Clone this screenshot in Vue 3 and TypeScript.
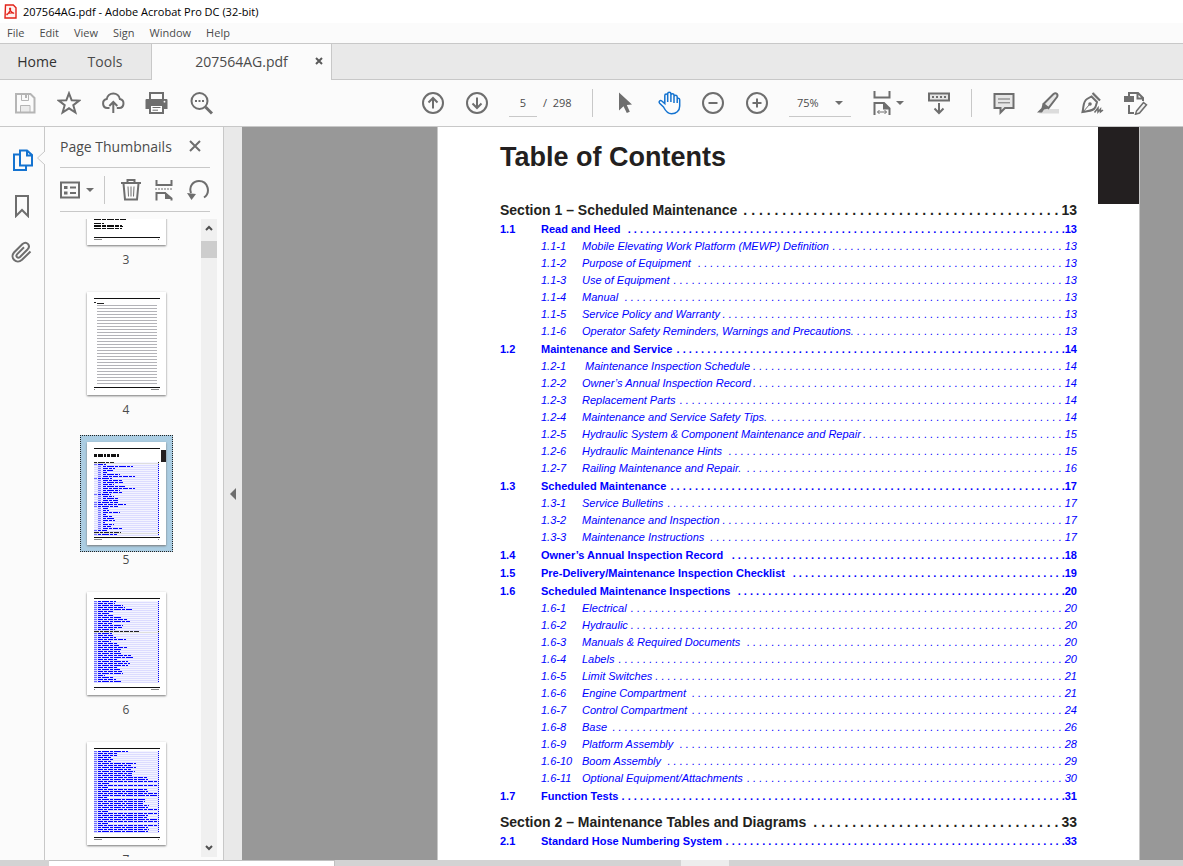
<script setup lang="ts">
import { onBeforeUnmount, onMounted, ref } from 'vue'

type Level = 'section' | 'chapter' | 'item'

interface Entry {
  level: Level
  num: string
  title: string
  page: number
}

interface Group {
  key: string
  entries: Entry[]
}

const section = (title: string, page: number): Entry => ({ level: 'section', num: '', title, page })
const chapter = (num: string, title: string, page: number): Entry => ({ level: 'chapter', num, title, page })
const item = (num: string, title: string, page: number): Entry => ({ level: 'item', num, title, page })

const groups: Group[] = [
  { key: 's1', entries: [section('Section 1 – Scheduled Maintenance', 13)] },
  {
    key: '1.1',
    entries: [
      chapter('1.1', 'Read and Heed', 13),
      item('1.1-1', 'Mobile Elevating Work Platform (MEWP) Definition', 13),
      item('1.1-2', 'Purpose of Equipment', 13),
      item('1.1-3', 'Use of Equipment', 13),
      item('1.1-4', 'Manual', 13),
      item('1.1-5', 'Service Policy and Warranty', 13),
      item('1.1-6', 'Operator Safety Reminders, Warnings and Precautions.', 13),
    ],
  },
  {
    key: '1.2',
    entries: [
      chapter('1.2', 'Maintenance and Service', 14),
      item('1.2-1', '\u00a0Maintenance Inspection Schedule', 14),
      item('1.2-2', 'Owner’s Annual Inspection Record', 14),
      item('1.2-3', 'Replacement Parts', 14),
      item('1.2-4', 'Maintenance and Service Safety Tips.', 14),
      item('1.2-5', 'Hydraulic System & Component Maintenance and Repair', 15),
      item('1.2-6', 'Hydraulic Maintenance Hints', 15),
      item('1.2-7', 'Railing Maintenance and Repair.', 16),
    ],
  },
  {
    key: '1.3',
    entries: [
      chapter('1.3', 'Scheduled Maintenance', 17),
      item('1.3-1', 'Service Bulletins', 17),
      item('1.3-2', 'Maintenance and Inspection', 17),
      item('1.3-3', 'Maintenance Instructions', 17),
    ],
  },
  { key: '1.4', entries: [chapter('1.4', 'Owner’s Annual Inspection Record', 18)] },
  { key: '1.5', entries: [chapter('1.5', 'Pre-Delivery/Maintenance Inspection Checklist', 19)] },
  {
    key: '1.6',
    entries: [
      chapter('1.6', 'Scheduled Maintenance Inspections', 20),
      item('1.6-1', 'Electrical', 20),
      item('1.6-2', 'Hydraulic', 20),
      item('1.6-3', 'Manuals & Required Documents', 20),
      item('1.6-4', 'Labels', 20),
      item('1.6-5', 'Limit Switches', 21),
      item('1.6-6', 'Engine Compartment', 21),
      item('1.6-7', 'Control Compartment', 24),
      item('1.6-8', 'Base', 26),
      item('1.6-9', 'Platform Assembly', 28),
      item('1.6-10', 'Boom Assembly', 29),
      item('1.6-11', 'Optional Equipment/Attachments', 30),
    ],
  },
  { key: '1.7', entries: [chapter('1.7', 'Function Tests', 31)] },
  { key: 's2', entries: [section('Section 2 – Maintenance Tables and Diagrams', 33)] },
  { key: '2.1', entries: [chapter('2.1', 'Standard Hose Numbering System', 33)] },
]

// Dot leaders hold as many dots as fit between a title and its page number.
const pageEl = ref<HTMLElement | null>(null)
const dots = ref<Record<string, string>>({})

function fillLeaders() {
  if (!pageEl.value) return
  const next: Record<string, string> = {}
  pageEl.value.querySelectorAll<HTMLElement>('[data-leader]').forEach((el) => {
    const glyph = parseFloat(getComputedStyle(el).fontSize) * 0.278
    const count = Math.max(0, Math.floor((el.clientWidth + glyph - 1) / (glyph * 2)))
    next[el.dataset.leader ?? ''] = Array(count).fill('.').join('\u00a0')
  })
  dots.value = next
}

let observer: ResizeObserver | undefined
onMounted(() => {
  fillLeaders()
  observer = new ResizeObserver(fillLeaders)
  if (pageEl.value) observer.observe(pageEl.value)
})
onBeforeUnmount(() => observer?.disconnect())

const menus = ['File', 'Edit', 'View', 'Sign', 'Window', 'Help']

interface Line {
  x: number
  w: number
  dark: boolean
  numX: number
}

const tocLines: Line[] = groups.flatMap((g) =>
  g.entries.map((e) => ({
    x: e.level === 'section' ? 7 : e.level === 'chapter' ? 11 : 16,
    w: Math.round(e.title.length * 0.62),
    dark: e.level === 'section',
    numX: e.level === 'chapter' ? 7 : 11,
  })),
)

const widthsSix = [18, 17, 25, 27, 34, 16, 12, 15, 23, 30, 32, 14, 25, 24, 17, 45, 14, 15, 18, 28, 13, 20, 21, 30, 24, 22, 23, 33, 36, 20, 30, 32, 30, 19, 22, 24, 25, 7, 15, 18, 23]
const widthsSeven = [30, 20, 19, 13, 15, 13, 38, 33, 38, 33, 37, 34, 34, 50, 50, 60, 12, 60, 10, 50, 50, 60, 60, 10, 47, 47, 45, 51, 50, 60, 10, 60, 50, 50, 60, 60, 10, 60, 50, 51, 50]

const lineList = (widths: number[], darkAt: number): Line[] =>
  widths.map((w, i) => ({ x: i === darkAt ? 7 : 11, w, dark: i === darkAt, numX: 7 }))

interface Thumb {
  page: number
  kind: 'text' | 'ruled' | 'toc'
  lines: Line[]
  top: number
}

const thumbs: Thumb[] = [
  { page: 3, kind: 'text', lines: [], top: 20 },
  { page: 4, kind: 'ruled', lines: [], top: 14 },
  { page: 5, kind: 'toc', lines: tocLines, top: 21 },
  { page: 6, kind: 'toc', lines: lineList(widthsSix, 15), top: 10 },
  { page: 7, kind: 'toc', lines: lineList(widthsSeven, -1), top: 10 },
]

const selected = ref(5)
const pageInput = ref('5')
const zoomLevel = ref('75%')
</script>

<template>
  <div class="app">
    <header class="titlebar">
      <svg class="logo" viewBox="0 0 13 15" aria-hidden="true">
        <path d="M1.500 1h7.800l2.700 2.700V14H1z" fill="#fff3f1" stroke="#e2231a" stroke-width="1.400" />
        <path d="M6 4c1.300 0 .7 3.200-3.200 7M6 4c-1.200 0 .4 4.600 4.200 5.400M3 10.800c-1.200-.9 3.800-2.800 7-1.600" fill="none" stroke="#e2231a" stroke-width="1.200" />
      </svg>
      <span>207564AG.pdf - Adobe Acrobat Pro DC (32-bit)</span>
    </header>

    <nav class="menubar">
      <button v-for="m in menus" :key="m" type="button">{{ m }}</button>
    </nav>

    <div class="tabs">
      <button type="button" class="tab home">Home</button>
      <button type="button" class="tab tools">Tools</button>
      <div class="doc-tab">
        <span class="doc-name">207564AG.pdf</span>
        <button type="button" class="close-tab" aria-label="Close tab">
          <svg viewBox="0 0 8 8"><path d="M1 1l6 6M7 1L1 7" stroke="#5a5a5a" stroke-width="2" /></svg>
        </button>
      </div>
    </div>

    <div class="toolbar">
      <button type="button" class="tool disabled" aria-label="Save">
        <svg viewBox="0 0 24 24"><path d="M8 15h8.500v6H8z" fill="#ebebeb" /><path class="s" d="M3 3h14.500l4 4v14.500H3z" /><path class="s thin" d="M8.500 3v6.500h7V3M7.500 21v-6.500h9.500v6.500" /><path class="f" d="M12 4h2v3h-2z" /></svg>
      </button>
      <button type="button" class="tool" aria-label="Star">
        <svg viewBox="0 0 24 24"><path class="s" d="M12 2.300l2.700 7 7.500.3-5.900 4.600 2.100 7.300L12 17.300l-6.400 4.200 2.100-7.300L1.800 9.600l7.500-.3z" /></svg>
      </button>
      <button type="button" class="tool" aria-label="Share">
        <svg viewBox="0 0 24 24"><path class="s" d="M8.500 17H6.300a4.500 4.500 0 0 1-.6-8.900 6.700 6.700 0 0 1 13.200 0A4.500 4.500 0 0 1 18.200 17h-2.400M12.300 22V11M8.300 15l4-4 4 4" /></svg>
      </button>
      <button type="button" class="tool" aria-label="Print">
        <svg viewBox="0 0 24 24"><path class="s" d="M5 8V2h13v6" /><path class="f" d="M1.500 8h20q1 0 1 1v9h-4v-4H4.500v4h-4V9q0-1 1-1z" /><path d="M5 14h13v8H5z" class="s" fill="#fff" /><path class="s thin" d="M7.500 16.500h8M7.500 19.200h5.500" /><circle cx="19.500" cy="10.700" r=".9" fill="#fff" /></svg>
      </button>
      <button type="button" class="tool" aria-label="Find text">
        <svg viewBox="0 0 24 24"><circle class="s" cx="10.500" cy="10" r="8" /><path d="M16.500 16l6.500 6.500" class="s" stroke-width="3" /><path class="f" d="M6 9h2v2H6zM9.500 9h2v2h-2zM13 9h2v2h-2z" /></svg>
      </button>

      <button type="button" class="tool first" aria-label="Previous page">
        <svg viewBox="0 0 24 24"><circle class="s" cx="12" cy="12" r="10" /><path class="s" d="M12 17.500V7M7.500 11.500L12 7l4.500 4.500" /></svg>
      </button>
      <button type="button" class="tool" aria-label="Next page">
        <svg viewBox="0 0 24 24"><circle class="s" cx="12" cy="12" r="10" /><path class="s" d="M12 6.500V17M7.500 12.500L12 17l4.500-4.500" /></svg>
      </button>
      <input v-model="pageInput" class="page-input" type="text" aria-label="Page number" />
      <span class="page-count">/&nbsp; 298</span>
      <i class="sep"></i>
      <button type="button" class="tool" aria-label="Select">
        <svg viewBox="0 0 24 24"><path class="f" d="M6 1.500v18l4.500-4.200 3.300 6.700 3-1.300-3-6.700 5.200-.5z" /></svg>
      </button>
      <button type="button" class="tool active" aria-label="Hand">
        <svg viewBox="0 0 24 24"><path class="s hand" d="M6.500 16L2.600 12.200C1.200 10.600 3.200 8.800 4.800 10l3 2.600V4.500c0-2 2.900-2 2.900 0V11 3c0-2.200 3.200-2.200 3.200 0v8-6.800c0-2 3.100-2 3.100 0V12 5.800c0-2 3-2 3.200 0V12 8.500c0-1.800 2.500-1.600 2.500.3V15c0 5-3.700 7.800-8.100 7.800-4.400 0-6.200-3-8.100-6.800z" /></svg>
      </button>
      <button type="button" class="tool" aria-label="Zoom out">
        <svg viewBox="0 0 24 24"><circle class="s" cx="12" cy="12" r="10" /><path class="s" d="M7.500 12h9" /></svg>
      </button>
      <button type="button" class="tool" aria-label="Zoom in">
        <svg viewBox="0 0 24 24"><circle class="s" cx="12" cy="12" r="10" /><path class="s" d="M7.500 12h9M12 7.500v9" /></svg>
      </button>
      <div class="zoom">
        <select v-model="zoomLevel" aria-label="Zoom level">
          <option>50%</option>
          <option>75%</option>
          <option>100%</option>
        </select>
        <svg class="caret" viewBox="0 0 8 4"><path class="f" d="M0 0h8L4 4z" /></svg>
      </div>
      <button type="button" class="tool fit" aria-label="Fit width">
        <svg viewBox="0 0 24 24"><path class="s" d="M4.500 0v6.500h15V0M4.500 24V12h9.500l5.500 5.500V24" /><path d="M13 11.500l7 7h-7z" class="f" /><path class="s thin" d="M7.500 21h9M9.500 19l-2 2 2 2M14.500 19l2 2-2 2" /></svg>
        <svg class="caret" viewBox="0 0 8 4"><path class="f" d="M0 0h8L4 4z" /></svg>
      </button>
      <button type="button" class="tool" aria-label="Read mode">
        <svg viewBox="0 0 24 24"><path class="s" d="M2 2.500h20v7H2z" fill="#e6e6e6" /><path class="f" d="M5 5h2v2H5zM9 5h2v2H9zM13 5h2v2h-2zM17 5h2v2h-2z" /><path class="s" d="M12 12v10M7.500 17.500L12 22l4.500-4.500" /></svg>
      </button>
      <i class="sep"></i>
      <button type="button" class="tool" aria-label="Add comment">
        <svg viewBox="0 0 24 24"><path class="s" d="M2.500 3h19v14H13l-4.500 4.500V17h-6z" fill="#e6e6e6" /><path class="s thin" d="M6 8h12M6 11.800h12" /></svg>
      </button>
      <button type="button" class="tool" aria-label="Highlight text">
        <svg viewBox="0 0 24 24"><path d="M6 18h17v4.500H3z" fill="#dcdcdc" /><path class="s" d="M7.500 13L17.500 3c2.500-2 5 .5 3.500 3l-8.500 11z" fill="#e6e6e6" /><path class="f" d="M6.500 13l6 4.500-4.500 1-2 3H1l4.500-4.500z" /></svg>
      </button>
      <button type="button" class="tool" aria-label="Sign document">
        <svg viewBox="0 0 24 24"><path d="M14 1l7 8-3 1-6-6z" fill="#dcdcdc" /><path class="s" d="M12.500 2l7.500 7.500M11.500 5.500l5.500 5.500-1.500 5c-2 4-6 3.500-13 5 1.500-7 .5-10.500 4.500-13z" /><path class="s thin" d="M3 21l6.500-7.500" /><circle class="f" cx="10" cy="13" r="1.800" /><path class="s thick" d="M14.500 21.500l3.500-4.500v4l2.500-3v3l2.500-2" /></svg>
      </button>
      <button type="button" class="tool" aria-label="Edit document">
        <svg viewBox="0 0 24 24"><path class="f" d="M0 5h10v6H0z" /><path class="s" d="M5 5V2h9l5 5v3M5 14v8h5M13.500 2v5.500H19" /><path class="s thick" d="M12.500 20l7-8.500 3 2.300-7 8.200-4 1.200z" fill="#f3f3f3" /></svg>
      </button>
    </div>

    <main class="workspace">
      <nav class="rail" aria-label="Navigation panes">
        <button type="button" class="rail-btn active" aria-label="Page thumbnails">
          <svg viewBox="0 0 24 24"><path class="s" d="M10 2.500h7l5 4.500v10.500H10zM17 3v4.500H22M9.500 6.500H4V22h12v-4" /></svg>
        </button>
        <button type="button" class="rail-btn" aria-label="Bookmarks">
          <svg viewBox="0 0 24 24"><path class="s" d="M6 2h12v20l-6-6-6 6z" /></svg>
        </button>
        <button type="button" class="rail-btn" aria-label="Attachments">
          <svg viewBox="0 0 24 24"><path class="s" d="M20.500 11.500l-8.500 8.300c-5.500 5-12.500-1.800-8-7.300L12.500 4c4-3.500 8.500 1.500 5.200 5.200L10 17c-2.300 2-4.800-.8-2.800-2.900l6.800-6.800" /></svg>
        </button>
        <svg class="notch" viewBox="0 0 9 16"><path d="M9 0v1L1.500 8 9 15v1" fill="#fbfbfb" stroke="#c8c8c8" /></svg>
      </nav>

      <aside class="panel">
        <div class="panel-head">
          <h2>Page Thumbnails</h2>
          <button type="button" aria-label="Close panel">
            <svg viewBox="0 0 12 12"><path d="M1 1l10 10M11 1L1 11" stroke="#6e6e6e" stroke-width="2" /></svg>
          </button>
        </div>
        <div class="panel-tools">
          <button type="button" class="options" aria-label="Options">
            <svg class="list-icon" viewBox="0 0 20 18"><path class="s" d="M1 1.500h18v15H1z" /><path class="f" d="M4 5h3.500v3H4zM4 10.500h3.500v3H4z" /><path class="s" d="M10 6.500h6M10 12h6" /></svg>
            <svg class="caret" viewBox="0 0 8 4"><path class="f" d="M0 0h8L4 4z" /></svg>
          </button>
          <i class="sep small"></i>
          <button type="button" aria-label="Delete pages">
            <svg viewBox="0 0 24 24"><path class="s" d="M2 5h20M8.500 5V2h7v3M4.500 5.500l1.500 16h12l1.500-16" /><path class="s thin" d="M9 8.500l.5 10M12 8.500v10M15 8.500l-.5 10" /></svg>
          </button>
          <button type="button" aria-label="Split pages">
            <svg viewBox="0 0 24 24"><path class="s" d="M4.500 2v5h15V2M4.500 22.500V15H13l6.500 5.500v2" /><path class="f" d="M13 14l7 7h-7z" /><path class="s thin" d="M3 11h18" stroke-dasharray="2 1" /></svg>
          </button>
          <button type="button" aria-label="Rotate pages">
            <svg viewBox="0 0 24 24"><path class="s" d="M5 15C2.500 8 7.500 3 13 3c9 0 12 11.500 5 16.500" /><path class="f" d="M1 15l9 1-4.500 6z" /></svg>
          </button>
        </div>
        <div class="thumb-area">
          <div class="thumb-view">
            <ol class="thumbs">
              <li v-for="t in thumbs" :key="t.page">
                <button type="button" class="thumb" :class="{ selected: selected === t.page }" :aria-label="'Page ' + t.page" @click="selected = t.page">
                  <span class="sheet">
                    <svg viewBox="0 0 79 103" aria-hidden="true" shape-rendering="crispEdges">
                      <rect x="7" y="6" width="66" height="1" fill="#111" />
                      <template v-if="t.kind === 'ruled'">
                        <path d="M7 10.500h2M10 11.500h7" stroke="#222" />
                        <rect v-for="n in 27" :key="n" x="10" :y="10 + n * 3" width="60" height="1" fill="#b3b3b8" />
                      </template>
                      <template v-else-if="t.kind === 'text'">
                        <path d="M7 77.500h32M7 81.500h10M7 83.500h28M7 84.500h29M7 86.500h28" stroke="#111" stroke-dasharray="7 1 4 1" />
                      </template>
                      <template v-else>
                        <g v-if="t.page === 5">
                          <path d="M7 13.500h26" stroke="#111" stroke-width="3" stroke-dasharray="3 1 5 1 2 1" />
                          <rect x="74" y="8" width="5" height="12" fill="#231f20" />
                        </g>
                        <g v-for="(l, i) in t.lines" :key="i">
                          <rect x="7" :y="t.top + i * 2" width="65" height="1" :fill="l.dark ? '#dedede' : '#dcdcff'" />
                          <rect x="7" :y="t.top + i * 2 - 1" width="65" height="1" fill="#f4f4ff" />
                          <line :x1="l.x" :x2="l.x + l.w" :y1="t.top + i * 2 - 0.5" :y2="t.top + i * 2 - 0.5" :stroke="l.dark ? '#222' : '#0000ff'" :stroke-dasharray="i % 2 ? '5 1 3 1' : '3 1 7 1'" />
                          <rect v-if="!l.dark" :x="l.numX" :y="t.top + i * 2 - 1" width="3" height="1" fill="#7070ff" />
                          <rect x="71" :y="t.top + i * 2 - 1" width="1" height="1" :fill="l.dark ? '#111' : '#0000f0'" />
                        </g>
                      </template>
                      <rect x="7" y="95" width="66" height="1" fill="#111" />
                      <path :d="t.page % 2 ? 'M7 97.500h8M71 97.500h1' : 'M64 97.500h8M7 97.500h1'" stroke="#888" />
                    </svg>
                  </span>
                </button>
                <span class="thumb-label">{{ t.page }}</span>
              </li>
            </ol>
          </div>
          <div class="scrollbar">
            <svg viewBox="0 0 8 6"><path d="M1 5l3-3 3 3" fill="none" stroke="#505050" stroke-width="2" /></svg>
            <i class="grip"></i>
            <svg class="down" viewBox="0 0 8 6"><path d="M1 1l3 3 3-3" fill="none" stroke="#505050" stroke-width="2" /></svg>
          </div>
        </div>
      </aside>

      <button type="button" class="collapse" aria-label="Collapse panel">
        <svg viewBox="0 0 6 12"><path class="f" d="M6 0v12L0 6z" /></svg>
      </button>

      <section class="document">
        <article ref="pageEl" class="page">
          <div class="thumb-index"></div>
          <h1>Table of Contents</h1>
          <div v-for="g in groups" :key="g.key" class="group">
            <a v-for="e in g.entries" :key="e.num + e.title" href="#" class="entry" :class="e.level">
              <span v-if="e.num" class="num">{{ e.num }}</span>
              <span class="title">{{ e.title }}</span>
              <span class="leader" aria-hidden="true" :data-leader="e.num + e.title">{{ dots[e.num + e.title] }}</span>
              <span class="no">{{ e.page }}</span>
            </a>
          </div>
        </article>
      </section>
    </main>

    <footer class="strip">
      <i class="window"></i>
      <i class="light"></i>
    </footer>
  </div>
</template>

<style>
body {
  margin: 0;
  overflow: hidden;
}
</style>

<style scoped>
.app {
  height: 100vh;
  display: flex;
  flex-direction: column;
  background: #fbfbfb;
  color: #4b4b4b;
  font-family: "Open Sans", "Noto Sans", sans-serif;
  font-size: 12px;
}
button {
  border: 0;
  padding: 0;
  margin: 0;
  background: none;
  font: inherit;
  color: inherit;
}
svg {
  display: block;
  flex: none;
}
.s {
  stroke: currentColor;
  stroke-width: 2;
}
.s:not([fill]) {
  fill: none;
}
.s[stroke-width="3"] {
  stroke-width: 3;
}
.s.thin {
  stroke-width: 1;
}
.s.thick {
  stroke-width: 1.5;
}
.s.hand {
  stroke-width: 1.5;
}
.f {
  fill: currentColor;
}
.titlebar {
  height: 23px;
  flex: none;
  display: flex;
  align-items: center;
  gap: 6px;
  padding-left: 4px;
  background: #fff;
  color: #000;
  font-size: 11px;
  white-space: nowrap;
}
.logo {
  width: 13px;
  height: 15px;
}
.menubar {
  height: 18px;
  flex: none;
  display: flex;
  gap: 15px;
  align-items: center;
  padding: 0 0 2px 7px;
  border-bottom: 1px solid #c8c8c8;
  font-size: 11px;
}
.tabs {
  height: 36px;
  flex: none;
  display: flex;
  background: #e9e9e9;
  box-shadow: inset 0 -1px #c8c8c8;
  font-size: 14px;
}
.tab {
  padding-bottom: 2px;
}
.tab.home {
  width: 74px;
  color: #323232;
}
.tab.tools {
  width: 62px;
  margin-right: 15px;
}
.doc-tab {
  width: 181px;
  box-sizing: border-box;
  display: flex;
  align-items: center;
  padding-bottom: 2px;
  border: solid #c8c8c8;
  border-width: 0 1px;
  background: #fbfbfb;
}
.doc-name {
  flex: 1;
  padding-left: 24px;
  text-align: center;
}
.close-tab {
  padding: 8px;
}
.close-tab svg {
  width: 8px;
  height: 8px;
}
.toolbar {
  height: 47px;
  flex: none;
  box-sizing: border-box;
  display: flex;
  align-items: center;
  padding: 0 25px 2px 3px;
  color: #6e6e6e;
  box-shadow: inset 0 -1px #c8c8c8;
}
.tool {
  width: 44px;
  height: 44px;
  flex: none;
  display: flex;
  align-items: center;
  justify-content: center;
}
.tool svg {
  width: 24px;
  height: 24px;
}
.tool.first {
  margin-left: auto;
}
.tool.disabled {
  color: #b5b5b5;
}
.active {
  color: #1473d0;
}
.page-input {
  width: 28px;
  height: 28px;
  box-sizing: border-box;
  margin-left: 10px;
  border: 0;
  border-bottom: 1px solid #c8c8c8;
  padding: 0;
  background: none;
  color: #4b4b4b;
  font: inherit;
  font-size: 11px;
  text-align: center;
}
.page-count {
  width: 39px;
  margin-left: 6px;
  color: #4b4b4b;
  font-size: 11px;
  white-space: nowrap;
}
.sep {
  width: 1px;
  height: 28px;
  margin: 0 10px;
  background: #c8c8c8;
}
.zoom {
  position: relative;
  width: 62px;
  margin-left: 10px;
}
.zoom select {
  display: block;
  width: 100%;
  height: 28px;
  box-sizing: border-box;
  appearance: none;
  border: 0;
  border-bottom: 1px solid #c8c8c8;
  border-radius: 0;
  padding: 0 0 0 8px;
  background: none;
  color: #4b4b4b;
  font: inherit;
  font-size: 11px;
}
.caret,
.tool .caret {
  width: 8px;
  height: 4px;
}
.zoom .caret {
  position: absolute;
  right: 8px;
  top: 12px;
}
.tool.fit {
  width: 66px;
  padding-left: 6px;
  gap: 2px;
}
.workspace {
  flex: 1;
  min-height: 0;
  display: flex;
}
.rail {
  position: relative;
  width: 44px;
  flex: none;
  padding-top: 10px;
  box-sizing: border-box;
  color: #6e6e6e;
}
.rail-btn {
  width: 44px;
  height: 46px;
  display: flex;
  align-items: center;
  justify-content: center;
}
.rail-btn svg {
  width: 24px;
  height: 24px;
}
.rail-btn.active {
  color: #1473d0;
}
.notch {
  position: absolute;
  right: -1px;
  top: 23px;
  width: 9px;
  height: 16px;
}
.panel {
  width: 178px;
  flex: none;
  display: flex;
  flex-direction: column;
  border: solid #c8c8c8;
  border-width: 0 1px;
}
.panel-head {
  height: 38px;
  flex: none;
  margin: 0 13px 0 15px;
  padding-bottom: 2px;
  display: flex;
  align-items: center;
  border-bottom: 1px solid #c8c8c8;
}
.panel-head h2 {
  flex: 1;
  margin: 0;
  font-size: 14px;
  font-weight: 400;
  white-space: nowrap;
}
.panel-head svg {
  width: 12px;
  height: 12px;
}
.panel-head button {
  padding: 0 9px 0 0;
}
.panel-tools {
  height: 43px;
  flex: none;
  margin: 0 13px 7px 15px;
  display: flex;
  align-items: center;
  justify-content: space-between;
  border-bottom: 1px solid #c8c8c8;
  color: #6e6e6e;
}
.panel-tools svg {
  width: 24px;
  height: 24px;
}
.options {
  display: flex;
  align-items: center;
  gap: 6px;
}
.panel-tools .list-icon {
  width: 20px;
  height: 18px;
}
.panel-tools .caret {
  width: 8px;
  height: 4px;
}
.sep.small {
  margin: 0 4px 0 0;
}
.thumb-area {
  flex: 1;
  min-height: 0;
  display: flex;
  margin: 0 6px 3px 0;
}
.thumb-view {
  flex: 1;
  overflow: hidden;
}
.thumbs {
  list-style: none;
  margin: -84px 0 0;
  padding: 0 0 0 6px;
}
.thumbs li {
  height: 150px;
  display: flex;
  flex-direction: column;
  align-items: center;
}
.thumb {
  padding: 6px;
  border: 1px solid transparent;
}
.thumb.selected {
  background: #abcde2;
  border: 1px dotted #222;
}
.sheet {
  display: block;
  background: #fff;
  box-shadow: 0 1px 2px #777;
}
.sheet svg {
  width: 79px;
  height: 103px;
}
.thumb-label {
  line-height: 16px;
}
.scrollbar {
  width: 16px;
  display: flex;
  flex-direction: column;
  align-items: center;
  padding: 6px 0;
  box-sizing: border-box;
  background: #f0f0f0;
}
.scrollbar svg {
  width: 8px;
  height: 6px;
}
.grip {
  width: 100%;
  height: 17px;
  margin-top: 10px;
  background: #cdcdcd;
}
.down {
  margin-top: auto;
}
.collapse {
  width: 18px;
  flex: none;
  display: flex;
  align-items: center;
  justify-content: center;
  background: #e9e9e9;
  color: #6e6e6e;
}
.collapse svg {
  width: 6px;
  height: 12px;
}
.document {
  flex: 1;
  min-width: 0;
  overflow: hidden;
  padding: 0 43px 0 195px;
  background: #989898;
}
.page {
  position: relative;
  min-height: 100%;
  box-sizing: border-box;
  padding: 14px 62px 0 62px;
  border: solid #c8c8c8;
  border-width: 0 1px;
  background: #fff;
  font-family: "Liberation Sans", Arial, sans-serif;
}
.thumb-index {
  position: absolute;
  top: 0;
  right: 0;
  width: 41px;
  height: 77px;
  background: #231f20;
}
h1 {
  margin: 0 0 27px;
  color: #231f20;
  font-size: 27px;
  line-height: 32px;
}
.group {
  margin-bottom: 1px;
}
.entry {
  display: flex;
  color: #0000ff;
  font-size: 11px;
  line-height: 17px;
  text-decoration: none;
  white-space: nowrap;
}
.entry.section {
  margin-top: 7px;
  color: #231f20;
  font-size: 14px;
  line-height: 20px;
  font-weight: 700;
}
.entry.chapter {
  font-weight: 700;
}
.entry.item {
  padding-left: 41px;
  font-style: italic;
}
.num {
  width: 41px;
  flex: none;
}
.leader {
  flex: 1;
  min-width: 0;
  margin: 0 3px 0 1px;
  text-align: right;
}
.chapter .leader {
  margin-right: 0;
}
.strip {
  height: 6px;
  flex: none;
  display: flex;
  background: #d3d3d3;
}
.window {
  width: 285px;
  margin-left: 49px;
  border: solid #c0c0c0;
  border-width: 1px 1px 0 0;
  background: #fff;
}
.light {
  width: 48px;
  margin-left: 346px;
  background: #ededed;
}
</style>
